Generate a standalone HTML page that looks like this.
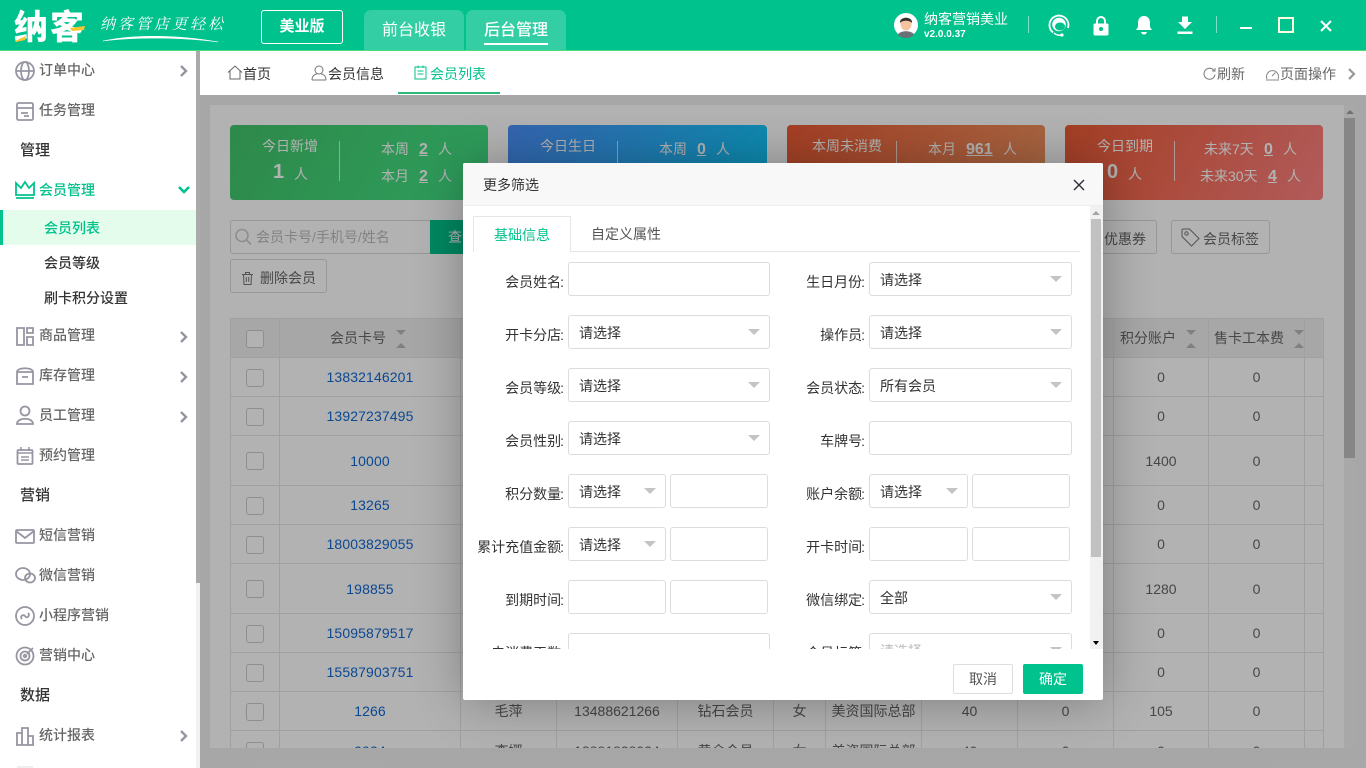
<!DOCTYPE html>
<html lang="zh-CN">
<head>
<meta charset="utf-8">
<title>纳客</title>
<style>
*{box-sizing:border-box;margin:0;padding:0}
html,body{width:1366px;height:768px;overflow:hidden;background:#fff;font-family:"Liberation Sans","Noto Sans CJK SC",sans-serif;font-size:14px;color:#333}
.t{position:absolute;white-space:nowrap;line-height:20px}
.a{position:absolute}
svg{position:absolute;overflow:visible}
#top{position:absolute;left:0;top:0;width:1366px;height:51px;background:#00c28c;border-bottom:1px solid #4cdc7c}
.w{color:#fff}
.tab{position:absolute;top:10px;width:100px;height:40px;background:#33ceA3;border-radius:7px 7px 0 0;color:#fff;font-size:16px;text-align:center;line-height:42px}
#side{position:absolute;left:0;top:51px;width:196px;height:717px;background:#fff;overflow:hidden}
.m{position:absolute;left:39px;font-weight:500;color:#666;line-height:20px;white-space:nowrap}
.h{position:absolute;left:20px;font-weight:500;font-size:15px;color:#333;line-height:20px}
.n{position:absolute;left:44px;font-weight:500;color:#333;line-height:20px;white-space:nowrap}
.ic{fill:none;stroke:#9696a2;stroke-width:1.8}
.ch{fill:none;stroke:#9696a2;stroke-width:2.4}
#main{position:absolute;left:200px;top:95px;width:1166px;height:673px;background:#f0f0f0}
#panel{position:absolute;left:210px;top:105px;width:1146px;height:643px;background:#fff;overflow:hidden}
.card{position:absolute;top:125px;height:75px;border-radius:4px}
.card-t{color:#fff}
.u{text-decoration:underline;font-weight:700;font-size:16px;line-height:20px}
.div{position:absolute;top:141px;width:1px;height:40px;background:rgba(255,255,255,.75)}
.btn{position:absolute;border:1px solid #d9d9d9;border-radius:3px;background:#fff;color:#666}
#clip{position:absolute;left:0;top:0;width:1366px;height:748px;overflow:hidden}
table{position:absolute;left:230px;top:318px;border-collapse:collapse;table-layout:fixed;width:1093px;color:#666}
td{border:1px solid #e6e6e6;text-align:center;padding:0;overflow:hidden;white-space:nowrap;line-height:20px}
.hd td{background:#f0f0f0;height:39px}
.b{color:#0f68d2;letter-spacing:.12px}
.cb{position:absolute;left:246px;width:18px;height:18px;border:1px solid #ccc;border-radius:3px;background:#fff}
.up{position:absolute;width:0;height:0;border-left:5px solid transparent;border-right:5px solid transparent;border-bottom:5px solid #b8b8b8}
.dn{position:absolute;width:0;height:0;border-left:5px solid transparent;border-right:5px solid transparent;border-top:5px solid #b8b8b8}
#ov{position:absolute;left:200px;top:95px;width:1166px;height:673px;background:rgba(0,0,0,.3)}
#dlg{position:absolute;left:463px;top:163px;width:640px;height:537px;background:#fff;border-radius:2px;box-shadow:1px 1px 50px rgba(0,0,0,.3)}
.i,.s{position:absolute;height:34px;background:#fff;border:1px solid #dcdcdc;border-radius:3px}
.s{padding-left:10px;line-height:34px;color:#333}
.s::after{content:"";position:absolute;right:9px;top:13px;border-left:6px solid transparent;border-right:6px solid transparent;border-top:6px solid #c4c4c4}
.l{position:absolute;width:110px;text-align:right;line-height:20px;color:#333;white-space:nowrap}
.l span{margin-left:-1px}
.lr{left:755px}
.ll{left:454px}
</style>
</head>
<body>

<!-- top bar -->
<div id="top">
  <div class="t w" style="left:14px;top:9px;font-size:34px;font-weight:900;line-height:38px;letter-spacing:2px">纳客</div>
  <svg style="left:0;top:0" width="100" height="50"><path d="M15 41 L26 36 L25 40 L16 42Z" fill="#f7c62f"/><path d="M70 28 L85 26 L84 30 L72 31Z" fill="#f7c62f"/></svg>
  <div class="t w" style="left:100px;top:14px;font-family:'Noto Serif CJK SC','Liberation Serif',serif;font-size:15px;letter-spacing:3px;font-style:italic">纳客管店更轻松</div>
  <svg style="left:0;top:0" width="240" height="50"><path d="M103 41 C135 34 180 35 218 42 C180 37 135 37 103 41Z" fill="#fff" stroke="#fff" stroke-width=".5"/></svg>
  <div class="a w" style="left:261px;top:10px;width:82px;height:34px;border:1px solid #fff;border-radius:3px;text-align:center;line-height:32px;font-size:15px;font-weight:700">美业版</div>
  <div class="tab" style="left:364px">前台收银</div>
  <div class="tab" style="left:466px;font-weight:500">后台管理</div>
  <div class="a" style="left:484px;top:43px;width:64px;height:2px;background:#fff"></div>

  <svg style="left:894px;top:13px" width="24" height="24" viewBox="0 0 24 24"><circle cx="12" cy="12" r="12" fill="#fff"/><path d="M4 22 C5 17 19 17 20 22 A12 12 0 0 1 4 22Z" fill="#6b6f78"/><ellipse cx="12" cy="11" rx="5.500" ry="6.500" fill="#f4c4a1"/><path d="M6 10 C5 3 19 3 18 10 C16 7 8 7 6 10Z" fill="#33302e"/></svg>
  <div class="t w" style="left:924px;top:9px">纳客营销美业</div>
  <div class="t w" style="left:924px;top:25px;font-size:10px;font-weight:700">v2.0.0.37</div>
  <div class="a" style="left:1028px;top:16px;width:1px;height:17px;background:#7fe0c5"></div>
  <svg style="left:1048px;top:14px" width="22" height="24" viewBox="0 0 22 24"><path d="M5 18.500 A9.500 9.500 0 1 1 20 14" fill="none" stroke="#fff" stroke-width="1.800"/><circle cx="11" cy="10.500" r="6.800" fill="#fff"/><ellipse cx="12" cy="12.500" rx="5" ry="4" fill="#00c28c"/><path d="M6 19 C8 21 11 21.500 13 21" fill="none" stroke="#fff" stroke-width="1.500"/><circle cx="14" cy="21" r="1.600" fill="#fff"/></svg>
  <svg style="left:1093px;top:15px" width="16" height="21" viewBox="0 0 16 21"><path d="M4 9 V6 a4 4 0 0 1 8 0 V9" fill="none" stroke="#fff" stroke-width="2"/><rect x="0.500" y="8.500" width="15" height="12" rx="1.500" fill="#fff"/><circle cx="8" cy="14" r="2" fill="#00c28c"/></svg>
  <svg style="left:1135px;top:15px" width="18" height="20" viewBox="0 0 18 20"><path d="M9 1 C13 1 15 4 15 8 V12 L17 15 H1 L3 12 V8 C3 4 5 1 9 1Z" fill="#fff"/><path d="M6 17 H12 C11.500 19 10 19.500 9 19.500 C8 19.500 6.500 19 6 17Z" fill="#fff"/></svg>
  <svg style="left:1177px;top:16px" width="16" height="19" viewBox="0 0 16 19"><path d="M5 0.500 H11 V6 H15 L8 13 L1 6 H5Z" fill="#fff"/><rect x="0.500" y="15.500" width="15" height="2.500" fill="#fff"/></svg>
  <div class="a" style="left:1216px;top:16px;width:1px;height:17px;background:#7fe0c5"></div>
  <div class="a" style="left:1240px;top:27px;width:12px;height:2px;background:#fff"></div>
  <div class="a" style="left:1278px;top:17px;width:16px;height:16px;border:2px solid #fffbe0"></div>
  <svg style="left:1320px;top:20px" width="12" height="12" viewBox="0 0 12 12"><path d="M1 1 L11 11 M11 1 L1 11" stroke="#fff" stroke-width="2"/></svg>
</div>

<!-- sidebar -->
<div id="side">
  <svg style="left:0;top:-51px" width="196" height="768">
    <g class="ic">
      <circle cx="25" cy="71" r="9"/><ellipse cx="25" cy="71" rx="4" ry="9"/><path d="M16 71H34"/>
      <rect x="17" y="103" width="16" height="17" rx="1.500"/><path d="M17 108H33M21 113H28M24 116H29"/>
      <path d="M17 328H24V345H17ZM27 328H33V333H27ZM27 337H33V345H27Z"/>
      <path d="M17 372C17 367 33 367 33 372H17ZM17 372V384H33V372M22 377H28"/>
      <circle cx="25" cy="411" r="4.500"/><path d="M17 424C17 417 33 417 33 424Z"/>
      <rect x="17.500" y="450" width="15" height="14" rx="1"/><path d="M17 453H33M21 447V451M29 447V451M21 457H29M21 460H29" stroke-width="1.500"/>
      <rect x="16" y="530" width="18" height="13" rx="1"/><path d="M16 531L25 538L34 531"/>
      <ellipse cx="23" cy="574" rx="7" ry="6"/><ellipse cx="30" cy="578" rx="5" ry="4.500"/>
      <circle cx="25" cy="616" r="9"/><path d="M22 619C19 616 24 614 25 616C26 619 31 616 28 613"/>
      <circle cx="25" cy="656" r="8.500"/><circle cx="25" cy="656" r="4.500"/><circle cx="25" cy="656" r="1.300"/><path d="M27 654L33 648"/>
      <path d="M17 745V733H22V745ZM22 745V728H28V745ZM28 745V736H33V745ZM16 745H34"/>
    </g>
    <path d="M181 66L186 71L181 76M181 332L186 337L181 342M181 372L186 377L181 382M181 412L186 417L181 422M181 731L186 736L181 741" class="ch"/>
    <path d="M16 195V183L21 188L25 182L29 188L34 183V195ZM16 198H34" fill="none" stroke="#00c28c" stroke-width="1.800"/>
    <path d="M179 187L184 192L189 187" fill="none" stroke="#00c28c" stroke-width="2.600"/>
    <path d="M17 767H33" stroke="#ddd" stroke-width="1"/>
  </svg>
  <div class="m" style="top:9px">订单中心</div>
  <div class="m" style="top:49px">任务管理</div>
  <div class="h" style="top:90px">管理</div>
  <div class="m" style="top:129px;color:#00c28c">会员管理</div>
  <div class="a" style="left:0;top:159px;width:196px;height:35px;background:#e3fcec"></div>
  <div class="a" style="left:0;top:159px;width:3px;height:35px;background:#00c28c"></div>
  <div class="n" style="top:167px;color:#00c28c">会员列表</div>
  <div class="n" style="top:202px">会员等级</div>
  <div class="n" style="top:237px">刷卡积分设置</div>
  <div class="m" style="top:274px">商品管理</div>
  <div class="m" style="top:314px">库存管理</div>
  <div class="m" style="top:354px">员工管理</div>
  <div class="m" style="top:394px">预约管理</div>
  <div class="h" style="top:435px">营销</div>
  <div class="m" style="top:474px">短信营销</div>
  <div class="m" style="top:514px">微信营销</div>
  <div class="m" style="top:554px">小程序营销</div>
  <div class="m" style="top:594px">营销中心</div>
  <div class="h" style="top:635px">数据</div>
  <div class="m" style="top:674px">统计报表</div>
</div>
<div class="a" style="left:196px;top:51px;width:4px;height:717px;background:#f1f1f1"></div>
<div class="a" style="left:196px;top:51px;width:4px;height:532px;background:#aaa"></div>

<!-- second bar -->
<div class="a" style="left:200px;top:51px;width:1166px;height:44px;background:#fff"></div>
<svg style="left:227px;top:65px" width="16" height="15" viewBox="0 0 16 15"><path d="M1 7.500L8 1L15 7.500M3 6V14H13V6" fill="none" stroke="#666" stroke-width="1"/></svg>
<div class="t" style="left:243px;top:64px">首页</div>
<svg style="left:311px;top:65px" width="16" height="16" viewBox="0 0 16 16"><circle cx="8" cy="5" r="4" fill="none" stroke="#777"/><path d="M1 15C1 10 5 9 6 9M15 15C15 10 11 9 10 9M1 15H15" fill="none" stroke="#777"/></svg>
<div class="t" style="left:328px;top:64px">会员信息</div>
<svg style="left:414px;top:65px" width="13" height="15" viewBox="0 0 13 15"><path d="M1 2H12V14H1ZM4 .500V3M9 .500V3M3.500 6H9.500M3.500 9H9.500" fill="none" stroke="#00c28c"/></svg>
<div class="t" style="left:430px;top:64px;color:#00c28c">会员列表</div>
<div class="a" style="left:398px;top:92px;width:102px;height:2px;background:#2eb97c"></div>
<svg style="left:1203px;top:68px" width="13" height="13" viewBox="0 0 13 13"><path d="M11 2.500A5.500 5.500 0 1 0 12 6.500M9 3H12V0" fill="none" stroke="#777"/></svg>
<div class="t" style="left:1217px;top:64px;color:#666">刷新</div>
<svg style="left:1266px;top:68px" width="13" height="13" viewBox="0 0 13 13"><path d="M1 11A6 6 0 1 1 12 11M6 8L9.500 4.500M0 12H13" fill="none" stroke="#888"/></svg>
<div class="t" style="left:1280px;top:64px;color:#666">页面操作</div>
<svg style="left:1347px;top:68px" width="9" height="12" viewBox="0 0 9 12"><path d="M2 1L7 6L2 11" fill="none" stroke="#999" stroke-width="2.200"/></svg>

<!-- main -->
<div id="main"></div>
<div id="panel"></div>

<div class="card" style="left:230px;width:258px;background:linear-gradient(120deg,#43c56a,#43e386)"></div>
<div class="card" style="left:508px;width:259px;background:linear-gradient(120deg,#4c90fb,#0eccfb)"></div>
<div class="card" style="left:787px;width:258px;background:linear-gradient(120deg,#ec5a35,#f19762)"></div>
<div class="card" style="left:1065px;width:258px;background:linear-gradient(120deg,#ec5a35,#ff8383)"></div>

<div class="t card-t" style="left:262px;top:136px">今日新增</div>
<div class="t card-t" style="left:273px;top:162px;font-size:20px;font-weight:700">1</div>
<div class="t card-t" style="left:294px;top:164px">人</div>
<div class="div" style="left:339px"></div>
<div class="t card-t" style="left:381px;top:139px">本周</div><div class="t card-t u" style="left:419px;top:140px">2</div><div class="t card-t" style="left:438px;top:139px">人</div>
<div class="t card-t" style="left:381px;top:166px">本月</div><div class="t card-t u" style="left:419px;top:167px">2</div><div class="t card-t" style="left:438px;top:166px">人</div>

<div class="t card-t" style="left:540px;top:136px">今日生日</div>
<div class="div" style="left:617px"></div>
<div class="t card-t" style="left:659px;top:139px">本周</div><div class="t card-t u" style="left:697px;top:140px">0</div><div class="t card-t" style="left:716px;top:139px">人</div>

<div class="t card-t" style="left:812px;top:136px">本周未消费</div>
<div class="div" style="left:896px"></div>
<div class="t card-t" style="left:928px;top:139px">本月</div><div class="t card-t u" style="left:966px;top:140px">961</div><div class="t card-t" style="left:1003px;top:139px">人</div>

<div class="t card-t" style="left:1097px;top:136px">今日到期</div>
<div class="t card-t" style="left:1107px;top:162px;font-size:20px;font-weight:700">0</div>
<div class="t card-t" style="left:1128px;top:164px">人</div>
<div class="div" style="left:1174px"></div>
<div class="t card-t" style="left:1204px;top:139px">未来7天</div><div class="t card-t u" style="left:1264px;top:140px">0</div><div class="t card-t" style="left:1283px;top:139px">人</div>
<div class="t card-t" style="left:1200px;top:166px">未来30天</div><div class="t card-t u" style="left:1268px;top:167px">4</div><div class="t card-t" style="left:1287px;top:166px">人</div>

<!-- search row -->
<div class="btn" style="left:230px;top:220px;width:201px;height:34px"></div>
<svg style="left:235px;top:228px" width="17" height="18" viewBox="0 0 17 18"><circle cx="7" cy="7.500" r="6" fill="none" stroke="#ccc" stroke-width="1.600"/><path d="M11.500 12L16 16.500" stroke="#ccc" stroke-width="1.600"/></svg>
<div class="t" style="left:256px;top:227px;color:#bbb">会员卡号/手机号/姓名</div>
<div class="a" style="left:430px;top:220px;width:70px;height:34px;background:#00c28c;color:#fff;line-height:34px;padding-left:18px">查询</div>
<div class="btn" style="left:1040px;top:220px;width:117px;height:34px;line-height:36px;padding-left:49px">发优惠券</div>
<div class="btn" style="left:1171px;top:220px;width:99px;height:34px;line-height:36px;padding-left:31px">会员标签</div>
<svg style="left:1181px;top:228px" width="19" height="19" viewBox="0 0 19 19"><path d="M1 2.500C1 1.500 1.500 1 2.500 1H8.500L18 10.500L10.500 18L1 8.500Z" fill="none" stroke="#777"/><circle cx="5.500" cy="5.500" r="1.700" fill="none" stroke="#777"/></svg>
<div class="btn" style="left:230px;top:259px;width:97px;height:34px;line-height:36px;padding-left:29px">删除会员</div>
<svg style="left:242px;top:272px" width="11" height="13" viewBox="0 0 11 13"><path d="M0 2.500H11M3.500 2.500V.500H7.500V2.500M1.500 2.500L2 12.500H9L9.500 2.500M4.300 5V10M6.700 5V10" fill="none" stroke="#777"/></svg>

<!-- table -->
<div id="clip">
<table>
<colgroup><col style="width:49px"><col style="width:181px"><col style="width:96px"><col style="width:121px"><col style="width:96px"><col style="width:52px"><col style="width:96px"><col style="width:96px"><col style="width:96px"><col style="width:95px"><col style="width:96px"><col style="width:19px"></colgroup>
<tr class="hd"><td></td><td style="text-align:left;padding-left:50px">会员卡号</td><td></td><td></td><td></td><td></td><td></td><td></td><td></td><td style="text-align:left;padding-left:6px">积分账户</td><td style="text-align:left;padding-left:5px">售卡工本费</td><td></td></tr>
<tr style="height:39px"><td></td><td class="b">13832146201</td><td></td><td></td><td></td><td></td><td></td><td></td><td></td><td>0</td><td>0</td><td></td></tr>
<tr style="height:39px"><td></td><td class="b">13927237495</td><td></td><td></td><td></td><td></td><td></td><td></td><td></td><td>0</td><td>0</td><td></td></tr>
<tr style="height:50px"><td></td><td class="b">10000</td><td></td><td></td><td></td><td></td><td></td><td></td><td></td><td>1400</td><td>0</td><td></td></tr>
<tr style="height:39px"><td></td><td class="b">13265</td><td></td><td></td><td></td><td></td><td></td><td></td><td></td><td>0</td><td>0</td><td></td></tr>
<tr style="height:39px"><td></td><td class="b">18003829055</td><td></td><td></td><td></td><td></td><td></td><td></td><td></td><td>0</td><td>0</td><td></td></tr>
<tr style="height:50px"><td></td><td class="b">198855</td><td></td><td></td><td></td><td></td><td></td><td></td><td></td><td>1280</td><td>0</td><td></td></tr>
<tr style="height:39px"><td></td><td class="b">15095879517</td><td></td><td></td><td></td><td></td><td></td><td></td><td></td><td>0</td><td>0</td><td></td></tr>
<tr style="height:39px"><td></td><td class="b">15587903751</td><td></td><td></td><td></td><td></td><td></td><td></td><td></td><td>0</td><td>0</td><td></td></tr>
<tr style="height:39px"><td></td><td class="b">1266</td><td>毛萍</td><td>13488621266</td><td>钻石会员</td><td>女</td><td>美资国际总部</td><td>40</td><td>0</td><td>105</td><td>0</td><td></td></tr>
<tr style="height:37px"><td style="vertical-align:top"></td><td class="b" style="vertical-align:top;padding-top:10px">9934</td><td style="vertical-align:top;padding-top:10px">李娜</td><td style="vertical-align:top;padding-top:10px">13881838934</td><td style="vertical-align:top;padding-top:10px">黄金会员</td><td style="vertical-align:top;padding-top:10px">女</td><td style="vertical-align:top;padding-top:10px">美资国际总部</td><td style="vertical-align:top;padding-top:10px">40</td><td style="vertical-align:top;padding-top:10px">0</td><td style="vertical-align:top;padding-top:10px">0</td><td style="vertical-align:top;padding-top:10px">0</td><td></td></tr>
</table>
<div class="cb" style="top:330px"></div><div class="cb" style="top:369px"></div><div class="cb" style="top:408px"></div><div class="cb" style="top:452px"></div><div class="cb" style="top:497px"></div><div class="cb" style="top:536px"></div><div class="cb" style="top:580px"></div><div class="cb" style="top:625px"></div><div class="cb" style="top:664px"></div><div class="cb" style="top:703px"></div><div class="cb" style="top:742px"></div>
<div class="dn" style="left:396px;top:330px"></div><div class="up" style="left:396px;top:343px"></div>
<div class="dn" style="left:1186px;top:330px"></div><div class="up" style="left:1186px;top:343px"></div>
<div class="dn" style="left:1294px;top:330px"></div><div class="up" style="left:1294px;top:343px"></div>
</div>

<!-- main scrollbar -->
<div class="a" style="left:1344px;top:105px;width:12px;height:643px;background:#f1f1f1"></div>
<div class="a" style="left:1344px;top:118px;width:11px;height:340px;background:#c1c1c1"></div>
<div class="a" style="left:1346px;top:110px;width:0;height:0;border-left:4px solid transparent;border-right:4px solid transparent;border-bottom:4px solid #a3a3a3"></div>

<div id="ov"></div>

<!-- dialog -->
<div id="dlg">
  <div class="a" style="left:0;top:0;width:640px;height:43px;background:#f8f8f8;border-bottom:1px solid #eee;border-radius:2px 2px 0 0"></div>
  <div class="t" style="left:20px;top:12px;color:#333">更多筛选</div>
  <svg style="left:610px;top:16px" width="12" height="12" viewBox="0 0 12 12"><path d="M1 1L11 11M11 1L1 11" stroke="#2d2d3a" stroke-width="1.400"/></svg>
</div>
<div class="a" style="left:463px;top:206px;width:640px;height:443px;overflow:hidden">
 <div class="a" style="left:-463px;top:-206px;width:1366px;height:768px">
  <div class="a" style="left:473px;top:251px;width:607px;height:1px;background:#e6e6e6"></div>
  <div class="a" style="left:473px;top:216px;width:98px;height:36px;background:#fff;border:1px solid #e6e6e6;border-bottom:none"></div>
  <div class="t" style="left:494px;top:225px;color:#00c28c">基础信息</div>
  <div class="t" style="left:591px;top:224px;color:#555">自定义属性</div>

  <div class="l ll" style="top:272px">会员姓名<span>:</span></div><div class="i" style="left:568px;top:262px;width:202px"></div>
  <div class="l lr" style="top:272px">生日月份<span>:</span></div><div class="s" style="left:869px;top:262px;width:203px">请选择</div>

  <div class="l ll" style="top:325px">开卡分店<span>:</span></div><div class="s" style="left:568px;top:315px;width:202px">请选择</div>
  <div class="l lr" style="top:325px">操作员<span>:</span></div><div class="s" style="left:869px;top:315px;width:203px">请选择</div>

  <div class="l ll" style="top:378px">会员等级<span>:</span></div><div class="s" style="left:568px;top:368px;width:202px">请选择</div>
  <div class="l lr" style="top:378px">会员状态<span>:</span></div><div class="s" style="left:869px;top:368px;width:203px">所有会员</div>

  <div class="l ll" style="top:431px">会员性别<span>:</span></div><div class="s" style="left:568px;top:421px;width:202px">请选择</div>
  <div class="l lr" style="top:431px">车牌号<span>:</span></div><div class="i" style="left:869px;top:421px;width:203px"></div>

  <div class="l ll" style="top:484px">积分数量<span>:</span></div><div class="s" style="left:568px;top:474px;width:98px">请选择</div><div class="i" style="left:670px;top:474px;width:98px"></div>
  <div class="l lr" style="top:484px">账户余额<span>:</span></div><div class="s" style="left:869px;top:474px;width:99px">请选择</div><div class="i" style="left:972px;top:474px;width:98px"></div>

  <div class="l ll" style="top:537px">累计充值金额<span>:</span></div><div class="s" style="left:568px;top:527px;width:98px">请选择</div><div class="i" style="left:670px;top:527px;width:98px"></div>
  <div class="l lr" style="top:537px">开卡时间<span>:</span></div><div class="i" style="left:869px;top:527px;width:99px"></div><div class="i" style="left:972px;top:527px;width:98px"></div>

  <div class="l ll" style="top:590px">到期时间<span>:</span></div><div class="i" style="left:568px;top:580px;width:98px"></div><div class="i" style="left:670px;top:580px;width:98px"></div>
  <div class="l lr" style="top:590px">微信绑定<span>:</span></div><div class="s" style="left:869px;top:580px;width:203px">全部</div>

  <div class="l ll" style="top:643px">未消费天数<span>:</span></div><div class="i" style="left:568px;top:633px;width:202px"></div>
  <div class="l lr" style="top:643px">会员标签<span>:</span></div><div class="s" style="left:869px;top:633px;width:203px;color:#bbb">请选择</div>

  <div class="a" style="left:1090px;top:206px;width:13px;height:443px;background:#f1f1f1"></div>
  <div class="a" style="left:1091px;top:219px;width:10px;height:338px;background:#c1c1c1"></div>
  <div class="a" style="left:1092px;top:211px;width:0;height:0;border-left:4px solid transparent;border-right:4px solid transparent;border-bottom:4px solid #a3a3a3"></div>
  <div class="a" style="left:1093px;top:641px;width:0;height:0;border-left:3.500px solid transparent;border-right:3.500px solid transparent;border-top:4px solid #000"></div>
 </div>
</div>
<div class="a" style="left:953px;top:664px;width:60px;height:30px;border:1px solid #dedede;border-radius:2px;background:#fff;text-align:center;line-height:28px;color:#555">取消</div>
<div class="a" style="left:1023px;top:664px;width:60px;height:30px;border-radius:2px;background:#00c28c;text-align:center;line-height:30px;color:#fff">确定</div>

</body>
</html>
